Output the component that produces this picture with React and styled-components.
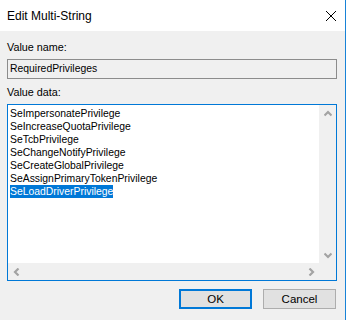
import React from "react";
import styled, { createGlobalStyle } from "styled-components";

const Global = createGlobalStyle`
  html, body { margin: 0; padding: 0; background: #ffffff; }
  body { width: 350px; height: 320px; overflow: hidden; font-family: "Liberation Sans", Arial, sans-serif; }
`;

const Window = styled.div`
  width: 345px;
  height: 320px;
  border-right: 1px solid #1883d7;
  display: flex;
  flex-direction: column;
  background: #f0f0f0;
`;

const TitleBar = styled.div`
  height: 31px;
  flex: none;
  background: #ffffff;
  display: flex;
  align-items: center;
  justify-content: space-between;
  padding: 0 9px 0 7px;
  font-size: 12px;
  color: #000;
`;

const Title = styled.span`
  line-height: 16px;
  margin-top: 1px;
`;

const CloseIcon = styled.svg`
  width: 10px;
  height: 10px;
  display: block;
`;

const Body = styled.div`
  display: flex;
  flex-direction: column;
  padding: 8px 8px 0 7px;
`;

const Label = styled.div`
  height: 16px;
  line-height: 16px;
  font-size: 10.8px;
  color: #000;
  margin-top: ${(p) => p.$mt || 0}px;
`;

const NameBox = styled.div`
  margin-top: 4px;
  height: 20px;
  box-sizing: border-box;
  border: 1px solid #8c8c8c;
  background: #f0f0f0;
  padding: 0 2px;
  font-size: 10.4px;
  line-height: 18px;
  color: #000;
`;

const DataBox = styled.div`
  margin-top: 4px;
  height: 177px;
  box-sizing: border-box;
  border: 1px solid #0078d7;
  display: grid;
  grid-template-columns: 1fr 17px;
  grid-template-rows: 1fr 17px;
  background: #f0f0f0;
`;

const TextArea = styled.div`
  background: #ffffff;
  padding: 2px 2px;
  font-size: 10.4px;
  line-height: 13px;
  color: #000;
`;

const Line = styled.div`
  height: 13px;
  white-space: nowrap;
`;

const Selected = styled.span`
  display: inline-block;
  height: 13px;
  background: #0078d7;
  color: #ffffff;
`;

const ScrollCell = styled.div`
  background: #f0f0f0;
  display: flex;
  flex-direction: ${(p) => (p.$vertical ? "column" : "row")};
  justify-content: space-between;
  align-items: center;
`;

const ArrowBtn = styled.div`
  width: 17px;
  height: 17px;
  display: flex;
  align-items: center;
  justify-content: center;
`;

const Corner = styled.div`
  background: #f0f0f0;
`;

const Buttons = styled.div`
  margin-top: 8px;
  display: flex;
  justify-content: flex-end;
  gap: 11px;
  padding-right: 1px;
`;

const Button = styled.div`
  width: 73px;
  height: 20px;
  box-sizing: border-box;
  background: #e1e1e1;
  border: ${(p) => (p.$default ? "2px solid #0078d7" : "1px solid #adadad")};
  display: flex;
  align-items: center;
  justify-content: center;
  font-size: 11.5px;
  color: #000;
`;

const Chevron = ({ dir }) => {
  const paths = {
    up: "M0.5 5.5 L4 2 L7.5 5.5",
    down: "M0.5 2.5 L4 6 L7.5 2.5",
    left: "M5.5 0.5 L2 4 L5.5 7.5",
    right: "M2.5 0.5 L6 4 L2.5 7.5",
  };
  return (
    <svg width="8" height="8" viewBox="0 0 8 8">
      <path d={paths[dir]} fill="none" stroke="#a3a3a3" strokeWidth="2.2" />
    </svg>
  );
};

const lines = [
  "SeImpersonatePrivilege",
  "SeIncreaseQuotaPrivilege",
  "SeTcbPrivilege",
  "SeChangeNotifyPrivilege",
  "SeCreateGlobalPrivilege",
  "SeAssignPrimaryTokenPrivilege",
];

export default function App() {
  return (
    <>
      <Global />
      <Window>
        <TitleBar>
          <Title>Edit Multi-String</Title>
          <CloseIcon viewBox="0 0 10 10">
            <path d="M0 0 L10 10 M10 0 L0 10" stroke="#000" strokeWidth="1" />
          </CloseIcon>
        </TitleBar>
        <Body>
          <Label>Value name:</Label>
          <NameBox>RequiredPrivileges</NameBox>
          <Label $mt={5}>Value data:</Label>
          <DataBox>
            <TextArea>
              {lines.map((l) => (
                <Line key={l}>{l}</Line>
              ))}
              <Line>
                <Selected>SeLoadDriverPrivilege</Selected>
              </Line>
            </TextArea>
            <ScrollCell $vertical>
              <ArrowBtn><Chevron dir="up" /></ArrowBtn>
              <ArrowBtn><Chevron dir="down" /></ArrowBtn>
            </ScrollCell>
            <ScrollCell>
              <ArrowBtn><Chevron dir="left" /></ArrowBtn>
              <ArrowBtn><Chevron dir="right" /></ArrowBtn>
            </ScrollCell>
            <Corner />
          </DataBox>
          <Buttons>
            <Button $default>OK</Button>
            <Button>Cancel</Button>
          </Buttons>
        </Body>
      </Window>
    </>
  );
}
